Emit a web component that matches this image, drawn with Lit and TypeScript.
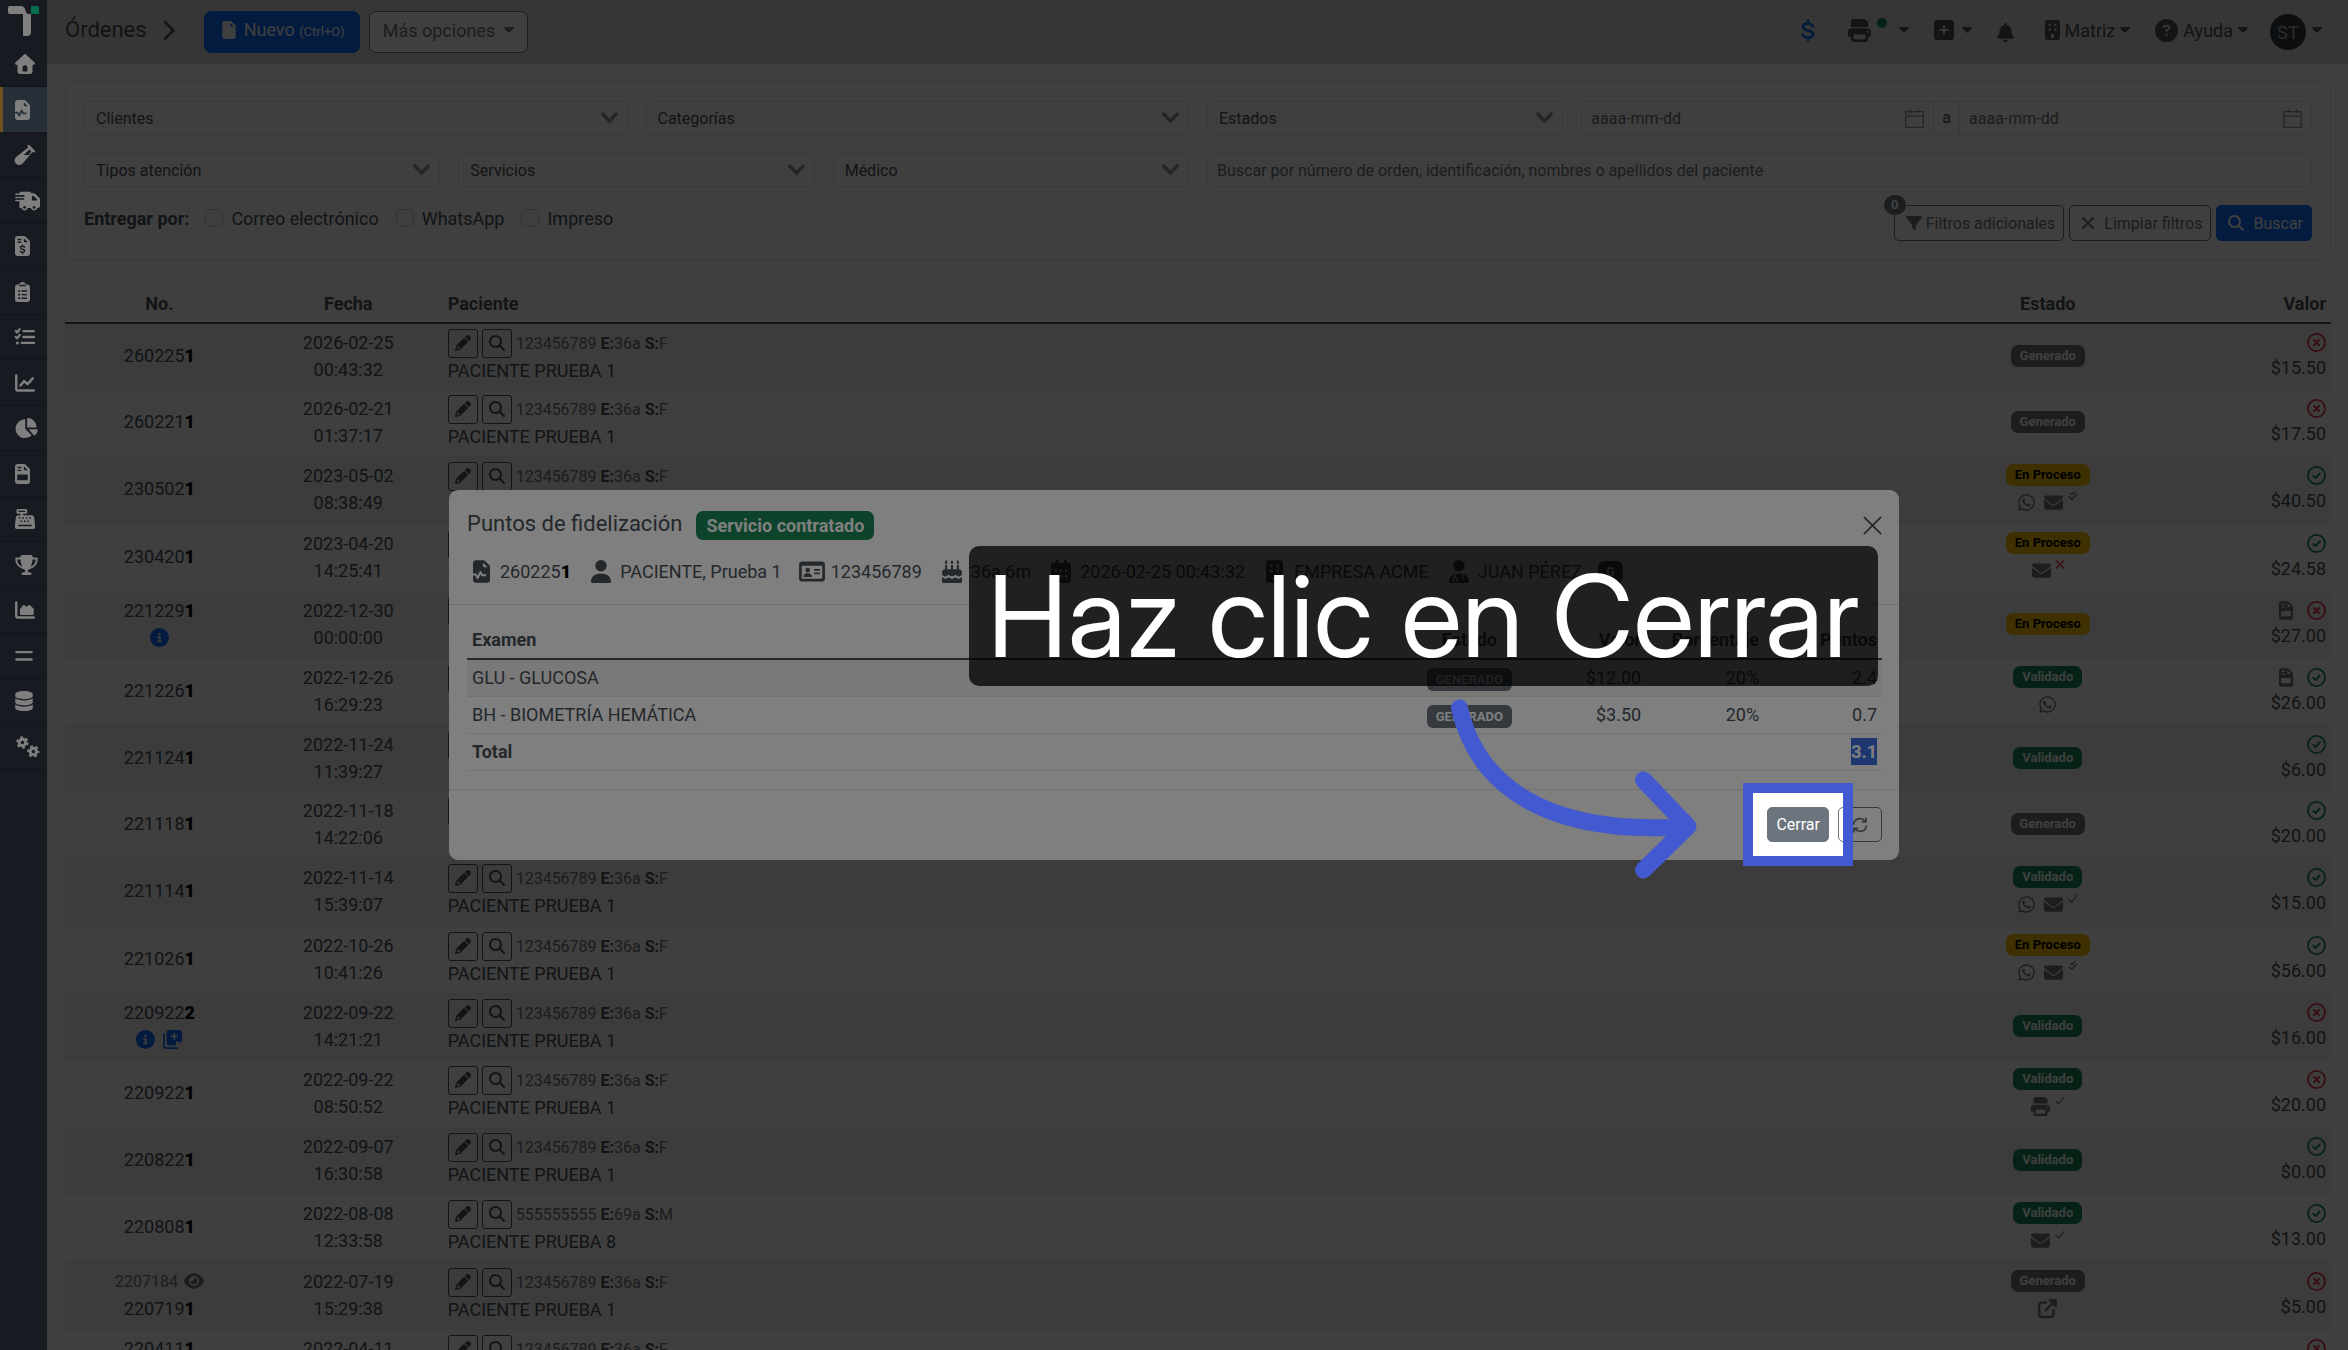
import { LitElement, html, svg, css, nothing, SVGTemplateResult } from "lit";
import { customElement, property } from "lit/decorators.js";
import { classMap } from "lit/directives/class-map.js";

interface Glyph {
  w: number;
  h: number;
  art: SVGTemplateResult;
}

const FILE_BODY =
  "M64 0C29 0 0 29 0 64v384c0 35 29 64 64 64h256c35 0 64-29 64-64V150c0-12-5-24-14-33L267 14c-9-9-21-14-33-14z";

const g = (w: number, h: number, art: SVGTemplateResult): Glyph => ({ w, h, art });

/* Shapes drawn with class "cut" take the colour of the surface below the icon. */
const GLYPHS: Record<string, Glyph> = {
  home: g(512, 512, svg`<path fill-rule="evenodd" d="M233 10c13-12 33-12 46 0l222 208c21 20 10 54-20 54h-33v176c0 35-29 64-64 64H128c-35 0-64-29-64-64V272H31c-30 0-41-34-20-54zM256 288c-35 0-62 27-62 60v84c0 9 7 16 16 16h92c9 0 16-7 16-16v-84c0-33-27-60-62-60z"/>`),
  fileWave: g(384, 512, svg`<path d=${FILE_BODY}/><path class="cut" d="M226 56v72c0 18 13 32 30 32h72zM0 300h66c8 0 15 4 19 11l21 42 42-94c8-17 32-18 41-1l32 62h75v44h-90c-8 0-15-4-19-11l-17-34-42 92c-8 17-32 18-41 1l-36-68H0z"/>`),
  vial: g(512, 512, svg`<path fill-rule="evenodd" d="M329 9c12-12 32-12 45 0l129 129c12 12 12 32 0 45s-32 12-45 0l-8-8-254 300c-48 48-126 50-172 4s-44-124 4-172L337 62l-8-8c-12-12-12-32 0-45zM374 108 222 256h130l62-92z"/>`),
  truck: g(640, 512, svg`<path d="M112 64c0-26 22-48 48-48h210c24 0 45 16 50 39h58c17 0 33 7 45 19l98 98c12 12 19 28 19 45v155c0 35-20 64-48 64h-20a88 88 0 0 1-168 0h-76a88 88 0 0 1-168 0h-20c-16 0-28-12-28-28V64z"/><path d="M24 64h220v40H24c-28 0-28-40 0-40zM8 144h210v40H8zM24 224h220v40H24c-28 0-28-40 0-40z"/><path class="cut" d="M112 104h130v40H64zM64 184h170v40H64zM432 128h46l88 88v24H432z"/><circle class="cut" cx="244" cy="420" r="36"/><circle class="cut" cx="488" cy="420" r="36"/>`),
  fileDollar: g(384, 512, svg`<path d=${FILE_BODY}/><path class="cut" d="M226 56v72c0 18 13 32 30 32h72zM64 70h96v36H64zM64 140h96v36H64z"/><path class="cutline" d="M248 286c-14-18-34-24-56-24-32 0-54 14-54 38 0 54 110 24 110 80 0 24-24 38-56 38-24 0-46-8-58-26M192 232v30M192 418v34" stroke-width="34"/>`),
  clipboard: g(384, 512, svg`<path d="M64 64h44c8-37 40-64 84-64s76 27 84 64h44c35 0 64 29 64 64v320c0 35-29 64-64 64H64c-35 0-64-29-64-64V128c0-35 29-64 64-64z"/><path class="cut" d="M112 72h160v36H112zM80 208h50v44H80zM164 212h144v36H164zM80 300h50v44H80zM164 304h144v36H164zM80 392h50v44H80zM164 396h144v36H164z"/>`),
  checks: g(512, 512, svg`<path class="line" d="M22 104l34 36 64-84M22 254l34 36 64-84M214 104h272M214 256h272M170 408h316" stroke-width="58"/><circle cx="62" cy="408" r="40"/>`),
  chartLine: g(512, 512, svg`<path class="line" d="M32 64v336c0 27 21 48 48 48h400M140 320l92-112 88 76 136-148" stroke-width="62"/>`),
  pie: g(576, 512, svg`<path d="M256 32v240l160 168c-42 42-102 72-168 72C116 512 8 404 8 272 8 148 126 40 240 32z"/><path d="M304 16c0-9 7-16 16-15 124 8 216 100 224 223 1 9-7 16-16 16H304z"/><path d="M344 288h216c9 0 16 8 15 17-6 54-34 104-72 140-6 6-16 6-22 0z"/>`),
  fileTable: g(384, 512, svg`<path d=${FILE_BODY}/><path class="cut" d="M226 56v72c0 18 13 32 30 32h72zM64 70h96v36H64zM64 144h96v36H64zM72 268h240c8 0 14 6 14 14v118c0 8-6 14-14 14H72c-8 0-14-6-14-14V282c0-8 6-14 14-14z"/>`),
  register: g(512, 512, svg`<path d="M72 0h208c20 0 34 14 34 34v54c0 20-14 34-34 34h-72v36h218c34 0 62 24 66 58l20 196v52c0 28-20 48-48 48H48c-28 0-48-20-48-48v-52l20-196c4-34 32-58 66-58h56v-36H72c-20 0-34-14-34-34V34C38 14 52 0 72 0z"/><path class="cut" d="M90 46h172v30H90zM96 214h40v36H96zM186 214h40v36h-40zM276 214h40v36h-40zM366 214h40v36h-40zM140 296h40v36h-40zM230 296h40v36h-40zM320 296h40v36h-40zM84 404h344v38H84z"/>`),
  trophy: g(576, 512, svg`<path d="M400 0H176c-26 0-48 22-47 48l1 16H24C11 64 0 75 0 88c0 93 34 157 79 201 44 43 98 65 138 76 23 6 39 26 39 45 0 21-17 38-38 38h-26a32 32 0 0 0 0 64h192a32 32 0 0 0 0-64h-26c-21 0-38-17-38-38 0-19 16-39 39-45 40-11 94-33 138-76 46-44 79-108 79-201 0-13-11-24-24-24H446l1-16c1-26-21-48-47-48zM49 112h84c9 90 29 150 52 191-25-11-51-27-73-49-32-31-58-76-63-142zm415 142c-22 22-48 38-73 49 23-41 43-101 52-191h84c-5 66-31 111-63 142z"/>`),
  chartArea: g(512, 512, svg`<path class="line" d="M32 64v336c0 27 21 48 48 48h400" stroke-width="62"/><path d="M128 352V240c0-8 3-16 9-22l66-76c14-16 38-16 52 0l33 34 58-44c12-10 30-8 40 4l85 82c6 6 9 14 9 22v112c0 18-14 32-32 32H160c-18 0-32-14-32-32z"/>`),
  equals: g(448, 512, svg`<path class="line" d="M30 156h388M30 346h388" stroke-width="62"/>`),
  database: g(448, 512, svg`<path d="M448 80v48c0 44-100 80-224 80S0 172 0 128V80C0 36 100 0 224 0s224 36 224 80zM0 186c50 36 130 54 224 54s174-18 224-54v102c0 44-100 80-224 80S0 332 0 288zM0 346c50 36 130 54 224 54s174-18 224-54v86c0 44-100 80-224 80S0 476 0 432z"/>`),
  gears: g(640, 512, svg`<g fill="none" stroke="currentColor"><circle cx="190" cy="140" r="82" stroke-width="72"/><circle cx="190" cy="140" r="132" stroke-width="54" stroke-dasharray="70 68"/><circle cx="470" cy="370" r="82" stroke-width="72"/><circle cx="470" cy="370" r="132" stroke-width="54" stroke-dasharray="70 68" stroke-dashoffset="30"/></g>`),
  file: g(384, 512, svg`<path d=${FILE_BODY}/><path class="cut" d="M226 56v72c0 18 13 32 30 32h72z"/>`),
  chevronRight: g(320, 512, svg`<path class="line" d="M50 50l206 206L50 462" stroke-width="66"/>`),
  chevronDown: g(512, 352, svg`<path class="line" d="M56 56l200 216L456 56" stroke-width="104"/>`),
  caret: g(320, 192, svg`<path d="M24 0h272c20 0 30 24 16 38L176 178c-9 9-23 9-32 0L8 38C-6 24 4 0 24 0z"/>`),
  dollar: g(320, 512, svg`<path class="line" d="M270 160c-18-44-60-62-110-62-66 0-112 28-112 76 0 106 228 56 228 162 0 48-48 78-116 78-56 0-104-22-122-70M160 30v66M160 416v66" stroke-width="60"/>`),
  print: g(512, 512, svg`<path d="M128 0c-35 0-64 29-64 64v112h384V90c0-13-5-25-14-34l-42-42c-9-9-21-14-34-14zM80 208c-44 0-80 30-80 76v84c0 18 14 32 32 32h32v48c0 35 29 64 64 64h256c35 0 64-29 64-64v-48h32c18 0 32-14 32-32v-84c0-46-36-76-80-76z"/><path class="cut" d="M128 344h256v96c0 4-4 8-8 8H136c-4 0-8-4-8-8z"/><circle class="cut" cx="438" cy="284" r="22"/>`),
  plusSquare: g(448, 448, svg`<path d="M64 0C29 0 0 29 0 64v320c0 35 29 64 64 64h320c35 0 64-29 64-64V64c0-35-29-64-64-64z"/><path class="cutline" d="M224 140v168M140 224h168" stroke-width="46"/>`),
  bell: g(448, 512, svg`<path d="M224 0c-17.700 0-32 14.300-32 32v19.200C119 66 64 130.600 64 208v18.800c0 47-17.300 92.400-48.500 127.600l-7.400 8.300c-8.400 9.400-10.400 22.900-5.300 34.400S19.400 416 32 416h384c12.600 0 24-7.400 29.200-18.900s3.100-25-5.300-34.400l-7.400-8.300C401.300 319.200 384 273.900 384 226.800V208c0-77.400-55-142-128-156.800V32c0-17.700-14.300-32-32-32zm45.300 493.300c12-12 18.700-28.300 18.700-45.300H160c0 17 6.700 33.300 18.700 45.300s28.300 18.700 45.300 18.700 33.300-6.700 45.300-18.700z"/>`),
  building: g(384, 512, svg`<path d="M64 0C29 0 0 29 0 64v384c0 35 29 64 64 64h256c35 0 64-29 64-64V64c0-35-29-64-64-64z"/><path class="cut" d="M92 96h56v56H92zM236 96h56v56h-56zM92 216h56v56H92zM236 216h56v56h-56zM152 460v-70c0-22 18-40 40-40s40 18 40 40v70z"/>`),
  question: g(512, 512, svg`<path fill-rule="evenodd" d="M256 512A256 256 0 1 0 256 0a256 256 0 1 0 0 512zM169.800 165.300c7.900-22.300 29.100-37.300 52.800-37.300h58.300c34.900 0 63.100 28.300 63.100 63.100 0 22.600-12.100 43.500-31.700 54.800L280 264.400c-.2 13-10.900 23.600-24 23.600-13.300 0-24-10.700-24-24v-13.500c0-8.600 4.600-16.500 12.100-20.800l44.300-25.400c4.700-2.700 7.600-7.700 7.600-13.100 0-8.400-6.800-15.100-15.100-15.100h-58.300c-3.400 0-6.400 2.100-7.500 5.300l-.4 1.200c-4.400 12.500-18.200 19-30.600 14.600s-19-18.200-14.600-30.600zM224 352a32 32 0 1 1 64 0 32 32 0 1 1-64 0z"/>`),
  info: g(512, 512, svg`<path fill-rule="evenodd" d="M256 512A256 256 0 1 0 256 0a256 256 0 1 0 0 512zM216 336h24v-64h-24c-13.300 0-24-10.700-24-24s10.700-24 24-24h48c13.300 0 24 10.700 24 24v88h8c13.300 0 24 10.700 24 24s-10.700 24-24 24h-80c-13.300 0-24-10.700-24-24s10.700-24 24-24zm40-208a32 32 0 1 1 0 64 32 32 0 1 1 0-64z"/>`),
  notes: g(512, 512, svg`<path d="M160 0c-35 0-64 29-64 64v288c0 35 29 64 64 64h192V320c0-18 14-32 32-32h128V64c0-35-29-64-64-64z"/><path d="M384 416l128-128v-16l-128 0zM384 416V320h128z"/><path class="line" d="M24 112v304c0 40 32 72 72 72h280" stroke-width="48"/><path class="cutline" d="M304 100v144M232 172h144" stroke-width="46"/>`),
  filter: g(512, 512, svg`<path d="M3.900 54.900C10.500 40.900 24.500 32 40 32h432c15.500 0 29.500 8.900 36.100 22.900s4.600 30.500-5.200 42.500L320 320.900V448c0 12.100-6.800 23.200-17.700 28.600s-23.800 4.300-33.500-3l-64-48c-8.100-6-12.800-15.500-12.800-25.600v-79.100L9 97.300C-.7 85.400-2.800 68.800 3.900 54.900z"/>`),
  xmark: g(384, 512, svg`<path class="line" d="M50 114l284 284M334 114L50 398" stroke-width="60"/>`),
  close: g(512, 512, svg`<path class="line" d="M36 36l440 440M476 36L36 476" stroke-width="46"/>`),
  search: g(512, 512, svg`<path fill-rule="evenodd" d="M416 208c0 45.900-14.900 88.300-40 122.700l126.600 126.700c12.500 12.500 12.500 32.800 0 45.300s-32.800 12.500-45.300 0L330.700 376c-34.400 25.200-76.800 40-122.700 40C93.100 416 0 322.900 0 208S93.100 0 208 0s208 93.100 208 208zM208 352a144 144 0 1 0 0-288 144 144 0 1 0 0 288z"/>`),
  pencil: g(512, 512, svg`<path fill-rule="evenodd" d="M410.300 231l11.300-11.300-129.900-129.900-11.300 11.300-22.600 22.600L58.600 322.900c-10.400 10.400-18 23.300-22.200 37.400L1 480.700c-2.500 8.400-.2 17.500 6.100 23.700s15.300 8.500 23.700 6.100l120.300-35.400c14.100-4.200 27-11.800 37.400-22.200l199.200-199.200zM160 399.400l-9.100 22.700c-4 3.100-8.500 5.400-13.300 6.900L59.400 452l23-78.100c1.400-4.900 3.800-9.400 6.900-13.300l22.700-9.100v32c0 8.800 7.200 16 16 16zM362.700 18.700L314.300 67.100l129.900 129.900 48.400-48.400c25-25 25-65.500 0-90.500l-39.300-39.400c-25-25-65.500-25-90.600 0z"/>`),
  envelope: g(512, 512, svg`<path d="M48 64C21.500 64 0 85.500 0 112c0 15.100 7.100 29.300 19.200 38.400l217.600 163.200c11.400 8.500 27 8.500 38.400 0l217.600-163.200c12.100-9.100 19.200-23.300 19.200-38.400 0-26.500-21.500-48-48-48zM0 176v208c0 35.300 28.700 64 64 64h384c35.300 0 64-28.700 64-64V176L294.400 339.200c-22.800 17.100-54 17.100-76.800 0z"/>`),
  whatsapp: g(448, 512, svg`<path d="M380.900 97.100C339 55.100 283.200 32 223.900 32c-122.400 0-222 99.600-222 222 0 39.100 10.200 77.300 29.600 111L0 480l117.700-30.900c32.400 17.700 68.900 27 106.100 27h.1c122.300 0 224.100-99.600 224.100-222 0-59.300-25.200-115-67.100-157zm-157 341.600c-33.200 0-65.700-8.900-94-25.700l-6.700-4-69.800 18.300L72 359.200l-4.400-7c-18.500-29.400-28.200-63.300-28.200-98.200 0-101.700 82.800-184.500 184.600-184.500 49.300 0 95.600 19.200 130.400 54.100 34.800 34.900 56.200 81.200 56.100 130.500 0 101.800-84.900 184.600-186.600 184.600zm101.200-138.200c-5.500-2.800-32.800-16.200-37.900-18-5.100-1.900-8.800-2.800-12.500 2.800-3.700 5.600-14.300 18-17.600 21.800-3.200 3.700-6.500 4.200-12 1.400-32.600-16.300-54-29.100-75.500-66-5.700-9.800 5.700-9.100 16.300-30.300 1.800-3.700.9-6.900-.5-9.700-1.400-2.800-12.500-30.100-17.100-41.200-4.500-10.800-9.100-9.300-12.500-9.500-3.200-.2-6.900-.2-10.600-.2-3.700 0-9.700 1.400-14.800 6.900-5.100 5.600-19.400 19-19.400 46.300 0 27.300 19.900 53.700 22.600 57.400 2.800 3.700 39.100 59.700 94.800 83.800 35.200 15.200 49 16.500 66.600 13.900 10.700-1.600 32.800-13.400 37.400-26.400 4.600-13 4.600-24.100 3.200-26.400-1.300-2.500-5-3.900-10.500-6.600z"/>`),
  check: g(448, 512, svg`<path class="line" d="M30 290l130 130L418 100" stroke-width="56"/>`),
  checkDouble: g(448, 512, svg`<path class="line" d="M110 110l62 62L320 20M50 270l120 120L400 140" stroke-width="64"/>`),
  times: g(384, 512, svg`<path class="line" d="M20 84l344 344M364 84L20 428" stroke-width="64"/>`),
  circleX: g(512, 512, svg`<circle class="line" cx="256" cy="256" r="230" stroke-width="48"/><path class="line" d="M188 188l136 136M324 188L188 324" stroke-width="52"/>`),
  circleCheck: g(512, 512, svg`<circle class="line" cx="256" cy="256" r="230" stroke-width="48"/><path class="line" d="M172 268l58 56L344 202" stroke-width="52"/>`),
  external: g(512, 512, svg`<path class="line" d="M208 96H96c-35 0-64 29-64 64v256c0 35 29 64 64 64h256c35 0 64-29 64-64V304M210 302L440 72" stroke-width="64"/><path d="M320 0h160c18 0 32 14 32 32v160c0 28-34 42-54 22L298 54c-20-20-6-54 22-54z"/>`),
  eye: g(576, 512, svg`<path fill-rule="evenodd" d="M288 32C207 32 142 69 95 113 49 156 17 208 3 244c-4 8-4 16 0 24 14 36 46 88 92 131 47 44 112 81 193 81s146-37 193-81c46-43 78-95 92-131 4-8 4-16 0-24-14-36-46-88-92-131C434 69 369 32 288 32zM144 256a144 144 0 1 1 288 0 144 144 0 1 1-288 0z"/><path d="M288 192c0 35-29 64-64 64-7 0-14-1-20-3-6-2-12 2-12 7a96 96 0 1 0 103-99c-6 0-10 6-8 11 1 7 1 13 1 20z"/>`),
  calendarLine: g(512, 512, svg`<path class="line" d="M20 70h472v422H20zM20 192h472M148 12v88M364 12v88" stroke-width="34"/>`),
  user: g(448, 512, svg`<path d="M224 256A128 128 0 1 0 224 0a128 128 0 1 0 0 256zm-45.700 48C79.800 304 0 383.800 0 482.300 0 498.700 13.300 512 29.700 512h388.600c16.400 0 29.700-13.300 29.700-29.700C448 383.800 368.200 304 269.700 304z"/>`),
  idCard: g(576, 512, svg`<path d="M64 32C29 32 0 61 0 96v320c0 35 29 64 64 64h448c35 0 64-29 64-64V96c0-35-29-64-64-64z"/><path class="cut" d="M60 128h456v280c0 6-4 12-12 12H72c-6 0-12-4-12-12z"/><circle cx="192" cy="224" r="52"/><path d="M96 380c0-50 40-84 84-84h24c44 0 84 34 84 84zM336 200h128v38H336zM336 280h128v38H336z"/>`),
  cake: g(448, 512, svg`<path d="M92 0c14 24 28 38 28 56s-12 30-28 30-28-12-28-30S78 24 92 0zM224 0c14 24 28 38 28 56s-12 30-28 30-28-12-28-30 14-32 28-56zM356 0c14 24 28 38 28 56s-12 30-28 30-28-12-28-30 14-32 28-56zM70 112h44v96h88v-96h44v96h88v-96h44v96c40 4 70 32 70 72v56c-30 0-38 30-74 30s-44-30-76-30-42 30-74 30-42-30-74-30-42 30-76 30-44-24-74-30v-56c0-40 30-68 70-72zM0 386c30 6 42 32 74 32s44-30 76-30 42 30 74 30 42-30 74-30 44 30 76 30 44-26 74-32v94c0 18-14 32-32 32H32c-18 0-32-14-32-32z"/>`),
  calendar: g(448, 512, svg`<path d="M128 0c18 0 32 14 32 32v32h128V32c0-18 14-32 32-32s32 14 32 32v32h48c27 0 48 21 48 48v336c0 35-29 64-64 64H64c-35 0-64-29-64-64V112c0-27 21-48 48-48h48V32c0-18 14-32 32-32z"/><path class="cut" d="M80 208h56v56H80zM196 208h56v56h-56zM312 208h56v56h-56zM80 336h56v56H80zM196 336h56v56h-56zM312 336h56v56h-56z"/>`),
  doctor: g(448, 512, svg`<path d="M224 256A128 128 0 1 0 224 0a128 128 0 1 0 0 256zm-45.700 48C79.800 304 0 383.800 0 482.300 0 498.700 13.300 512 29.700 512h388.600c16.400 0 29.700-13.300 29.700-29.700C448 383.800 368.200 304 269.700 304z"/><path class="cutline" d="M136 310v84M312 310v70M96 478v-40c0-24 18-44 40-44s40 20 40 44v40M312 416v2" stroke-width="32"/>`),
  refresh: g(512, 512, svg`<path class="line" d="M52 220C70 120 156 52 256 52c70 0 130 34 168 84M460 292c-18 100-104 168-204 168-70 0-130-34-168-84M448 40v112H336M64 472V360h112" stroke-width="56"/>`),
};

const sharedIcon = css`
  svg {
    display: block;
    flex: none;
    overflow: visible;
    fill: currentColor;
  }
  .cut {
    fill: var(--surface, #fff);
  }
  .line {
    fill: none;
    stroke: currentColor;
    stroke-linecap: round;
    stroke-linejoin: round;
  }
  .cutline {
    fill: none;
    stroke: var(--surface, #fff);
    stroke-linecap: round;
    stroke-linejoin: round;
  }
`;

/* Draws a glyph at a given height, its width following the glyph's proportions. */
const icon = (name: string, size = 18) => {
  const i = GLYPHS[name];
  return html`<svg
    viewBox="0 0 ${i.w} ${i.h}"
    width=${Math.round((size * i.w) / i.h)}
    height=${size}
    aria-hidden="true"
  >${i.art}</svg>`;
};

interface Order {
  no: string;
  date: string;
  time: string;
  state: "Generado" | "En Proceso" | "Validado";
  sent?: [string, string?][];
  paid: boolean;
  value: string;
  invoice?: boolean;
  flags?: string[];
  previous?: string;
  patient?: string;
  doc?: string;
  age?: string;
  sex?: string;
}

const ORDERS: Order[] = [
  { no: "2602251", date: "2026-02-25", time: "00:43:32", state: "Generado", paid: false, value: "$15.50" },
  { no: "2602211", date: "2026-02-21", time: "01:37:17", state: "Generado", paid: false, value: "$17.50" },
  { no: "2305021", date: "2023-05-02", time: "08:38:49", state: "En Proceso", sent: [["whatsapp"], ["envelope", "checkDouble"]], paid: true, value: "$40.50" },
  { no: "2304201", date: "2023-04-20", time: "14:25:41", state: "En Proceso", sent: [["envelope", "times"]], paid: true, value: "$24.58" },
  { no: "2212291", date: "2022-12-30", time: "00:00:00", state: "En Proceso", paid: false, value: "$27.00", invoice: true, flags: ["info"] },
  { no: "2212261", date: "2022-12-26", time: "16:29:23", state: "Validado", sent: [["whatsapp"]], paid: true, value: "$26.00", invoice: true },
  { no: "2211241", date: "2022-11-24", time: "11:39:27", state: "Validado", paid: true, value: "$6.00" },
  { no: "2211181", date: "2022-11-18", time: "14:22:06", state: "Generado", paid: true, value: "$20.00" },
  { no: "2211141", date: "2022-11-14", time: "15:39:07", state: "Validado", sent: [["whatsapp"], ["envelope", "check"]], paid: true, value: "$15.00" },
  { no: "2210261", date: "2022-10-26", time: "10:41:26", state: "En Proceso", sent: [["whatsapp"], ["envelope", "checkDouble"]], paid: true, value: "$56.00" },
  { no: "2209222", date: "2022-09-22", time: "14:21:21", state: "Validado", paid: false, value: "$16.00", flags: ["info", "notes"] },
  { no: "2209221", date: "2022-09-22", time: "08:50:52", state: "Validado", sent: [["print", "check"]], paid: false, value: "$20.00" },
  { no: "2208221", date: "2022-09-07", time: "16:30:58", state: "Validado", paid: true, value: "$0.00" },
  { no: "2208081", date: "2022-08-08", time: "12:33:58", state: "Validado", sent: [["envelope", "check"]], paid: true, value: "$13.00", patient: "PACIENTE PRUEBA 8", doc: "555555555", age: "69a", sex: "M" },
  { no: "2207191", date: "2022-07-19", time: "15:29:38", state: "Generado", sent: [["external"]], paid: false, value: "$5.00", previous: "2207184" },
  { no: "2204111", date: "2022-04-11", time: "", state: "En Proceso", paid: false, value: "", flags: ["info"], patient: "" },
];

@customElement("side-nav")
class SideNav extends LitElement {
  static styles = [
    sharedIcon,
    css`
      :host {
        --surface: #2e3742;
        display: block;
        background: #2e3742;
        color: #fff;
      }
      .logo {
        display: flex;
        justify-content: center;
        padding: 6px 0 5px;
      }
      .logo .mark {
        width: 31px;
        height: 31px;
      }
      .logo .spark {
        fill: #0cdca0;
      }
      ul {
        list-style: none;
        margin: 0;
        padding: 0;
      }
      li {
        box-sizing: border-box;
        height: 45px;
        border-bottom: 1px solid #232a33;
      }
      li:nth-child(even) {
        height: 46px;
      }
      a {
        box-sizing: border-box;
        display: flex;
        align-items: center;
        height: 100%;
        padding-left: 15px;
        color: inherit;
      }
      .active a {
        --surface: #4f5f70;
        background: #4f5f70;
        border-left: 3px solid #e0a63c;
        padding-left: 12px;
      }
    `,
  ];

  private items: [string, string][] = [
    ["home", "Inicio"], ["fileWave", "Órdenes"], ["vial", "Muestras"], ["truck", "Envíos"],
    ["fileDollar", "Cotizaciones"], ["clipboard", "Listas"], ["checks", "Tareas"], ["chartLine", "Resultados"],
    ["pie", "Reportes"], ["fileTable", "Facturas"], ["register", "Caja"], ["trophy", "Fidelización"],
    ["chartArea", "Estadísticas"], ["equals", "Convenios"], ["database", "Catálogos"], ["gears", "Configuración"],
  ];

  render() {
    return html`
      <div class="logo">
        <svg class="mark" viewBox="0 0 31 31" aria-hidden="true">
          <path d="M0 2a2 2 0 0 1 2-2h11c2 0 3 1 4 3l1 3c1 2 2 2 5 2v18a4 4 0 0 1-4 4h-3a1 1 0 0 1-1-1V8H2a2 2 0 0 1-2-2z" />
          <path class="spark" d="M23 0h6a2 2 0 0 1 2 2v6h-8z" />
        </svg>
      </div>
      <nav aria-label="Principal">
        <ul>
          ${this.items.map(
            ([name, label], n) => html`<li class=${classMap({ active: n === 1 })}>
              <a href="#" aria-label=${label}>${icon(name, 20)}</a>
            </li>`
          )}
        </ul>
      </nav>
    `;
  }
}

@customElement("top-bar")
class TopBar extends LitElement {
  static styles = [
    sharedIcon,
    css`
      :host {
        --surface: #dadada;
        box-sizing: border-box;
        display: flex;
        flex: none;
        align-items: center;
        justify-content: space-between;
        height: 64px;
        padding: 0 26px 0 18px;
        background: #dadada;
        color: #495057;
      }
      .side {
        display: flex;
        align-items: center;
      }
      h1 {
        margin: 0 16px 4px 0;
        font-size: 22px;
        line-height: 26px;
        font-weight: 400;
      }
      .crumb {
        margin: 0 28px 4px 0;
      }
      button {
        box-sizing: border-box;
        display: flex;
        align-items: center;
        font: inherit;
        color: inherit;
        border: 0;
        background: none;
        padding: 0;
      }
      .new,
      .more {
        height: 42px;
        padding: 0 13px 4px;
        border: 1px solid #6c757d;
        border-radius: 7px;
        background: #fff;
        color: #6c757d;
        gap: 9px;
      }
      .new {
        --surface: #0d6efd;
        margin-right: 9px;
        padding: 0 14px 4px 17px;
        background: #0d6efd;
        border-color: #0d6efd;
        color: #fff;
        gap: 8px;
      }
      .new small {
        font-size: 13px;
      }
      .tools {
        gap: 25px;
        padding-bottom: 4px;
      }
      .tools button {
        gap: 8px;
      }
      .tools .text {
        gap: 5px;
      }
      .money {
        color: #0d6efd;
        margin-right: 8px;
      }
      .dot {
        width: 10px;
        height: 10px;
        margin: 0 4px 14px -2px;
        border-radius: 50%;
        background: #198754;
      }
      .bell {
        margin-right: 6px;
        padding-top: 4px;
      }
      .avatar {
        display: grid;
        place-items: center;
        width: 36px;
        height: 36px;
        margin: 4px -2px 0 -3px;
        border-radius: 50%;
        background: #343a40;
        color: #fff;
      }
      .avatar span {
        opacity: 0.6;
      }
    `,
  ];

  render() {
    const caret = icon("caret", 6);
    return html`
      <div class="side">
        <h1>Órdenes</h1>
        <span class="crumb">${icon("chevronRight", 21)}</span>
        <button class="new">${icon("file", 18)}<span>Nuevo <small>(Ctrl+O)</small></span></button>
        <button class="more">Más opciones ${caret}</button>
      </div>
      <div class="side tools">
        <button class="money" aria-label="Pagos">${icon("dollar", 23)}</button>
        <button aria-label="Impresora">${icon("print", 23)}<span class="dot"></span>${caret}</button>
        <button aria-label="Agregar">${icon("plusSquare", 20)}${caret}</button>
        <button class="bell" aria-label="Notificaciones">${icon("bell", 19)}</button>
        <button class="text">${icon("building", 20)}<span>Matriz</span>${caret}</button>
        <button class="text">${icon("question", 23)}<span>Ayuda</span>${caret}</button>
        <button><span class="avatar"><span>ST</span></span>${caret}</button>
      </div>
    `;
  }
}

@customElement("order-filters")
class OrderFilters extends LitElement {
  static styles = [
    sharedIcon,
    css`
      :host {
        box-sizing: border-box;
        display: block;
        padding: 19px 18px 17px;
        border: 1px solid #dee2e6;
        border-radius: 8px;
        color: #495057;
      }
      .grid {
        display: grid;
        grid-template-columns: repeat(12, minmax(0, 1fr));
        gap: 18px;
      }
      .s2 { grid-column: span 2; }
      .s3 { grid-column: span 3; }
      .s4 { grid-column: span 4; }
      .s6 { grid-column: span 6; }
      .field {
        box-sizing: border-box;
        display: grid;
        grid-template-columns: minmax(0, 1fr);
        align-items: center;
        height: 34px;
        border: 1px solid #dee2e6;
        border-radius: 6px;
      }
      .field > * {
        grid-area: 1 / 1;
      }
      .field svg {
        justify-self: end;
        margin-right: 9px;
        color: #90959a;
        pointer-events: none;
      }
      select,
      input[type="text"] {
        box-sizing: border-box;
        width: 100%;
        height: 32px;
        appearance: none;
        border: 0;
        background: none;
        padding: 0 11px;
        font: inherit;
        font-size: 16px;
        color: inherit;
      }
      input[type="text"] {
        padding: 0 9px;
      }
      input::placeholder {
        color: #6c757d;
        opacity: 1;
      }
      .dates {
        display: flex;
        align-items: center;
        height: 34px;
        box-sizing: border-box;
        border: 1px solid #dee2e6;
        border-radius: 6px;
        font-size: 16px;
      }
      .dates .field {
        flex: 1;
        border: 0;
      }
      .dates .to {
        padding: 0 8px;
        line-height: 32px;
        border: solid #dee2e6;
        border-width: 0 1px;
      }
      .actions {
        display: flex;
        justify-content: space-between;
        align-items: flex-start;
        padding: 18px 0 1px;
      }
      .deliver {
        display: flex;
        align-items: center;
        height: 26px;
      }
      .deliver b {
        margin-right: 16px;
      }
      .deliver label {
        display: flex;
        align-items: center;
        gap: 8px;
        margin-right: 17px;
      }
      .deliver input {
        appearance: none;
        box-sizing: border-box;
        width: 18px;
        height: 18px;
        margin: 0;
        border: 1px solid #c4cacf;
        border-radius: 5px;
      }
      .buttons {
        display: flex;
        gap: 5px;
      }
      button {
        position: relative;
        box-sizing: border-box;
        display: flex;
        align-items: center;
        height: 36px;
        padding: 0 8px 0 11px;
        gap: 4px;
        border: 1px solid #6c757d;
        border-radius: 5px;
        background: #fff;
        color: #6c757d;
        font: inherit;
        font-size: 16px;
      }
      .clear {
        gap: 9px;
      }
      .go {
        gap: 9px;
        background: #0d6efd;
        border-color: #0d6efd;
        color: #fff;
      }
      .count {
        position: absolute;
        left: -11px;
        top: -11px;
        width: 22px;
        line-height: 20px;
        border-radius: 10px;
        background: #6c757d;
        color: #fff;
        font-size: 13px;
        font-weight: 700;
        text-align: center;
      }
    `,
  ];

  private select(label: string, span: string) {
    return html`<div class="field ${span}">
      <select aria-label=${label}><option>${label}</option></select>
      ${icon("chevronDown", 12)}
    </div>`;
  }

  private date(label: string) {
    return html`<div class="field">
      <input type="text" placeholder="aaaa-mm-dd" aria-label=${label} />
      ${icon("calendarLine", 19)}
    </div>`;
  }

  render() {
    return html`
      <div class="grid">
        ${this.select("Clientes", "s3")} ${this.select("Categorías", "s3")} ${this.select("Estados", "s2")}
        <div class="dates s4">${this.date("Desde")}<span class="to">a</span>${this.date("Hasta")}</div>
        ${this.select("Tipos atención", "s2")} ${this.select("Servicios", "s2")} ${this.select("Médico", "s2")}
        <div class="field s6">
          <input
            type="text"
            aria-label="Buscar"
            placeholder="Buscar por número de orden, identificación, nombres o apellidos del paciente"
          />
        </div>
      </div>
      <div class="actions">
        <div class="deliver">
          <b>Entregar por:</b>
          <label><input type="checkbox" />Correo electrónico</label>
          <label><input type="checkbox" />WhatsApp</label>
          <label><input type="checkbox" />Impreso</label>
        </div>
        <div class="buttons">
          <button><span class="count">0</span>${icon("filter", 16)}Filtros adicionales</button>
          <button class="clear">${icon("xmark", 18)}Limpiar filtros</button>
          <button class="go">${icon("search", 16)}Buscar</button>
        </div>
      </div>
    `;
  }
}

@customElement("orders-table")
class OrdersTable extends LitElement {
  @property({ attribute: false }) orders: Order[] = [];

  static styles = [
    sharedIcon,
    css`
      :host {
        display: block;
        color: #495057;
      }
      table {
        width: 100%;
        table-layout: fixed;
        border-collapse: separate;
        border-spacing: 0;
      }
      th {
        box-sizing: border-box;
        height: 40px;
        padding: 0 5px;
        border-bottom: 2px solid #495057;
        font-weight: 700;
        text-align: left;
      }
      .unit {
        width: 8.3333%;
      }
      td {
        box-sizing: border-box;
        height: 66px;
        padding: 0 5px 2px;
        border-bottom: 1px solid #e6e8ea;
        vertical-align: middle;
        line-height: 27px;
      }
      tr.sent td {
        height: 68px;
      }
      tbody tr:nth-child(odd) td {
        --surface: #f2f2f2;
        background: #f2f2f2;
      }
      .center {
        text-align: center;
      }
      .right {
        text-align: right;
      }
      .no b {
        color: #000;
        font-weight: 900;
      }
      .flags {
        display: flex;
        justify-content: center;
        align-items: center;
        gap: 8px;
        height: 26px;
        color: #0d6efd;
      }
      .previous {
        display: flex;
        justify-content: center;
        align-items: center;
        gap: 6px;
        color: #6c757d;
        font-size: 16px;
      }
      .who {
        display: flex;
        align-items: center;
        height: 29px;
        gap: 4px;
        font-size: 16px;
        color: #6c757d;
      }
      .who b {
        color: #495057;
      }
      .who button {
        display: grid;
        place-items: center;
        box-sizing: border-box;
        width: 30px;
        height: 29px;
        padding: 0;
        border: 1px solid #495057;
        border-radius: 3px;
        background: none;
        color: #495057;
      }
      .name {
        line-height: 25px;
        min-height: 25px;
      }
      .state {
        display: flex;
        flex-direction: column;
        align-items: center;
        gap: 7px;
      }
      .badge {
        padding: 0 9px;
        border-radius: 7px;
        line-height: 22px;
        font-size: 13px;
        font-weight: 700;
        color: #fff;
        background: #6c757d;
      }
      .badge.proceso {
        background: #ffc107;
        color: #000;
      }
      .badge.validado {
        background: #198754;
      }
      .channels {
        display: flex;
        gap: 9px;
        height: 20px;
        color: #6c757d;
      }
      .channel {
        display: flex;
        gap: 5px;
      }
      .mark {
        margin-top: -2px;
      }
      .bad {
        color: #dc3545;
      }
      .ok {
        color: #198754;
      }
      .pay {
        display: flex;
        justify-content: flex-end;
        align-items: center;
        height: 24px;
        gap: 14px;
        color: #6c757d;
      }
    `,
  ];

  private row(o: Order) {
    const name = o.patient ?? "PACIENTE PRUEBA 1";
    const badge = { badge: true, proceso: o.state === "En Proceso", validado: o.state === "Validado" };
    return html`<tr class=${classMap({ sent: !!o.sent })}>
      <td class="center no">
        ${o.previous ? html`<div class="previous">${o.previous}${icon("eye", 18)}</div>` : nothing}
        <div>${o.no.slice(0, -1)}<b>${o.no.slice(-1)}</b></div>
        ${o.flags ? html`<div class="flags">${o.flags.map((f) => icon(f, 19))}</div>` : nothing}
      </td>
      <td class="center">${o.date}<br />${o.time || html`&nbsp;`}</td>
      <td>
        <div class="who">
          <button aria-label="Editar">${icon("pencil", 16)}</button>
          <button aria-label="Ver">${icon("search", 16)}</button>
          <span>${o.doc ?? "123456789"} <b>E:</b>${o.age ?? "36a"} <b>S:</b>${o.sex ?? "F"}</span>
        </div>
        <div class="name">${name}</div>
      </td>
      <td>
        <div class="state">
          <span class=${classMap(badge)}>${o.state}</span>
          ${o.sent
            ? html`<div class="channels">
                ${o.sent.map(
                  ([kind, mark]) => html`<span class="channel">
                    ${icon(kind, 19)}
                    ${mark
                      ? html`<span class=${classMap({ mark: true, bad: mark === "times" })}>${icon(mark, 11)}</span>`
                      : nothing}
                  </span>`
                )}
              </div>`
            : nothing}
        </div>
      </td>
      <td class="right">
        <div class="pay">
          ${o.invoice ? icon("fileTable", 19) : nothing}
          <span class=${o.paid ? "ok" : "bad"}>${icon(o.paid ? "circleCheck" : "circleX", 19)}</span>
        </div>
        ${o.value || html`&nbsp;`}
      </td>
    </tr>`;
  }

  render() {
    return html`<table>
      <thead>
        <tr>
          <th class="unit center">No.</th>
          <th class="unit center">Fecha</th>
          <th>Paciente</th>
          <th class="unit center">Estado</th>
          <th class="unit right">Valor</th>
        </tr>
      </thead>
      <tbody>${this.orders.map((o) => this.row(o))}</tbody>
    </table>`;
  }
}

@customElement("points-dialog")
class PointsDialog extends LitElement {
  static styles = [
    sharedIcon,
    css`
      :host {
        position: relative;
        display: block;
        width: min(1450px, 96vw);
        border-radius: 9px;
        background: #fff;
        color: #495057;
      }
      header {
        padding: 19px 17px 13px 18px;
        border-bottom: 1px solid #dee2e6;
      }
      .title {
        display: flex;
        align-items: center;
        gap: 14px;
        height: 32px;
      }
      h2 {
        margin: 0 0 2px;
        font-size: 22px;
        line-height: 30px;
        font-weight: 400;
      }
      .badge {
        padding: 0 10px;
        border-radius: 7px;
        line-height: 29px;
        font-weight: 700;
        color: #fff;
        background: #198754;
      }
      .close {
        margin-left: auto;
        padding: 0;
        border: 0;
        background: none;
        color: #495057;
      }
      .facts {
        display: flex;
        align-items: center;
        gap: 16px;
        height: 27px;
        margin-top: 17px;
        padding-bottom: 6px;
      }
      .fact {
        display: grid;
        grid-template-columns: 28px auto;
        align-items: center;
        gap: 5px;
      }
      .fact svg {
        justify-self: center;
      }
      .fact b {
        color: #000;
        font-weight: 900;
      }
      .origin {
        padding: 0 8px;
        border-radius: 6px;
        background: #495057;
        color: #fff;
        font-size: 13px;
        font-weight: 700;
        line-height: 22px;
      }
      .body {
        padding: 18px 17px 18px 18px;
      }
      table {
        width: 100%;
        table-layout: fixed;
        border-collapse: separate;
        border-spacing: 0;
      }
      th,
      td {
        box-sizing: border-box;
        padding: 4px 5px 5px;
        line-height: 27px;
        text-align: left;
        border-bottom: 1px solid #dee2e6;
        font-weight: 400;
      }
      th {
        font-weight: 700;
      }
      thead th {
        line-height: 26px;
        border-bottom: 2px solid #495057;
      }
      tbody tr:first-child td {
        background: #f2f2f2;
      }
      .unit {
        width: 8.3333%;
      }
      .right {
        text-align: right;
      }
      .center {
        text-align: center;
      }
      .state {
        display: inline-block;
        padding: 0 9px;
        border-radius: 6px;
        background: #6c757d;
        color: #fff;
        font-size: 13px;
        font-weight: 700;
        line-height: 23px;
      }
      mark {
        display: inline-block;
        background: #3f6fe0;
        color: #fff;
        font-weight: 700;
      }
      footer {
        display: flex;
        justify-content: flex-end;
        gap: 9px;
        padding: 17px 17px 18px 18px;
        border-top: 1px solid #dee2e6;
      }
      footer button {
        display: grid;
        place-items: center;
        box-sizing: border-box;
        height: 35px;
        min-width: 44px;
        padding: 0 8px;
        border: 1px solid #6c757d;
        border-radius: 5px;
        background: #fff;
        color: #6c757d;
        font: inherit;
        font-size: 16px;
      }
      footer .dismiss {
        background: #6c757d;
        color: #fff;
      }
      /* Spotlight: a framed opening around the button in an otherwise dimmed page. */
      .spot {
        position: relative;
      }
      .spot::after {
        content: "";
        position: absolute;
        inset: -24px;
        border: 10px solid #4259d0;
        box-shadow: 0 0 0 3000px rgba(0, 0, 0, 0.5);
        pointer-events: none;
      }
      .callout {
        position: absolute;
        right: 21px;
        bottom: 174px;
        z-index: 2;
        padding: 0 18px;
        border-radius: 10px;
        background: rgba(0, 0, 0, 0.75);
        color: #fff;
        font-family: "Inter Display", "Inter Tight", Inter, "Liberation Sans", sans-serif;
        font-size: 113px;
        line-height: 140px;
        white-space: nowrap;
      }
      .arrow {
        position: absolute;
        right: 188px;
        bottom: -31px;
        z-index: 2;
        width: 270px;
        height: 200px;
        color: #4259d0;
      }
    `,
  ];

  private fact(name: string, text: unknown) {
    return html`<span class="fact">${icon(name, 23)}<span>${text}</span></span>`;
  }

  private exam(name: string, value: string, points: string) {
    return html`<tr>
      <td>${name}</td>
      <td class="center"><span class="state">GENERADO</span></td>
      <td class="right">${value}</td>
      <td class="right">20%</td>
      <td class="right">${points}</td>
    </tr>`;
  }

  render() {
    return html`
      <header>
        <div class="title">
          <h2>Puntos de fidelización</h2>
          <span class="badge">Servicio contratado</span>
          <button class="close" aria-label="Cerrar ventana">${icon("close", 19)}</button>
        </div>
        <div class="facts">
          ${this.fact("fileWave", html`260225<b>1</b>`)} ${this.fact("user", "PACIENTE, Prueba 1")}
          ${this.fact("idCard", "123456789")} ${this.fact("cake", "36a 6m")}
          ${this.fact("calendar", "2026-02-25 00:43:32")} ${this.fact("building", "EMPRESA ACME")}
          ${this.fact("doctor", "JUAN PÉREZ")}
          <span class="origin">G</span>
        </div>
      </header>
      <div class="body">
        <table>
          <thead>
            <tr>
              <th>Examen</th>
              <th class="unit center">Estado</th>
              <th class="unit right">Valor</th>
              <th class="unit right">Porcentaje</th>
              <th class="unit right">Puntos</th>
            </tr>
          </thead>
          <tbody>
            ${this.exam("GLU - GLUCOSA", "$12.00", "2.4")} ${this.exam("BH - BIOMETRÍA HEMÁTICA", "$3.50", "0.7")}
          </tbody>
          <tfoot>
            <tr>
              <th colspan="4">Total</th>
              <td class="right"><mark>3.1</mark></td>
            </tr>
          </tfoot>
        </table>
      </div>
      <footer>
        <span class="spot"><button class="dismiss">Cerrar</button></span>
        <button aria-label="Actualizar">${icon("refresh", 16)}</button>
      </footer>
      <div class="callout" role="status">Haz clic en Cerrar</div>
      <svg class="arrow" viewBox="0 0 270 200" aria-hidden="true">
        <path class="line" d="M18.500 17C35 90 100 146 246 135.500M202.500 89L247 135.500L202.500 179" stroke-width="17" />
      </svg>
    `;
  }
}

@customElement("app-root")
class AppRoot extends LitElement {
  static styles = css`
    :host {
      display: grid;
      grid-template-columns: 47px minmax(0, 1fr);
      height: 100vh;
      overflow: hidden;
      background: #fff;
      font-family: Roboto, "Liberation Sans", sans-serif;
      font-size: 18px;
      line-height: 27px;
    }
    side-nav {
      position: relative;
      z-index: 2;
    }
    main {
      display: flex;
      flex-direction: column;
      min-height: 0;
      overflow: hidden;
    }
    .content {
      padding: 17px 17px 0 18px;
    }
    orders-table {
      margin-top: 24px;
    }
    .backdrop {
      position: fixed;
      inset: 0;
      z-index: 1;
      background: rgba(0, 0, 0, 0.5);
    }
    .layer {
      position: fixed;
      inset: 0;
      z-index: 3;
      display: grid;
      place-items: center;
      overflow: hidden;
    }
  `;

  render() {
    return html`
      <side-nav></side-nav>
      <main>
        <top-bar></top-bar>
        <div class="content">
          <order-filters></order-filters>
          <orders-table .orders=${ORDERS}></orders-table>
        </div>
      </main>
      <div class="backdrop"></div>
      <div class="layer">
        <points-dialog role="dialog" aria-modal="true" aria-label="Puntos de fidelización"></points-dialog>
      </div>
    `;
  }
}
